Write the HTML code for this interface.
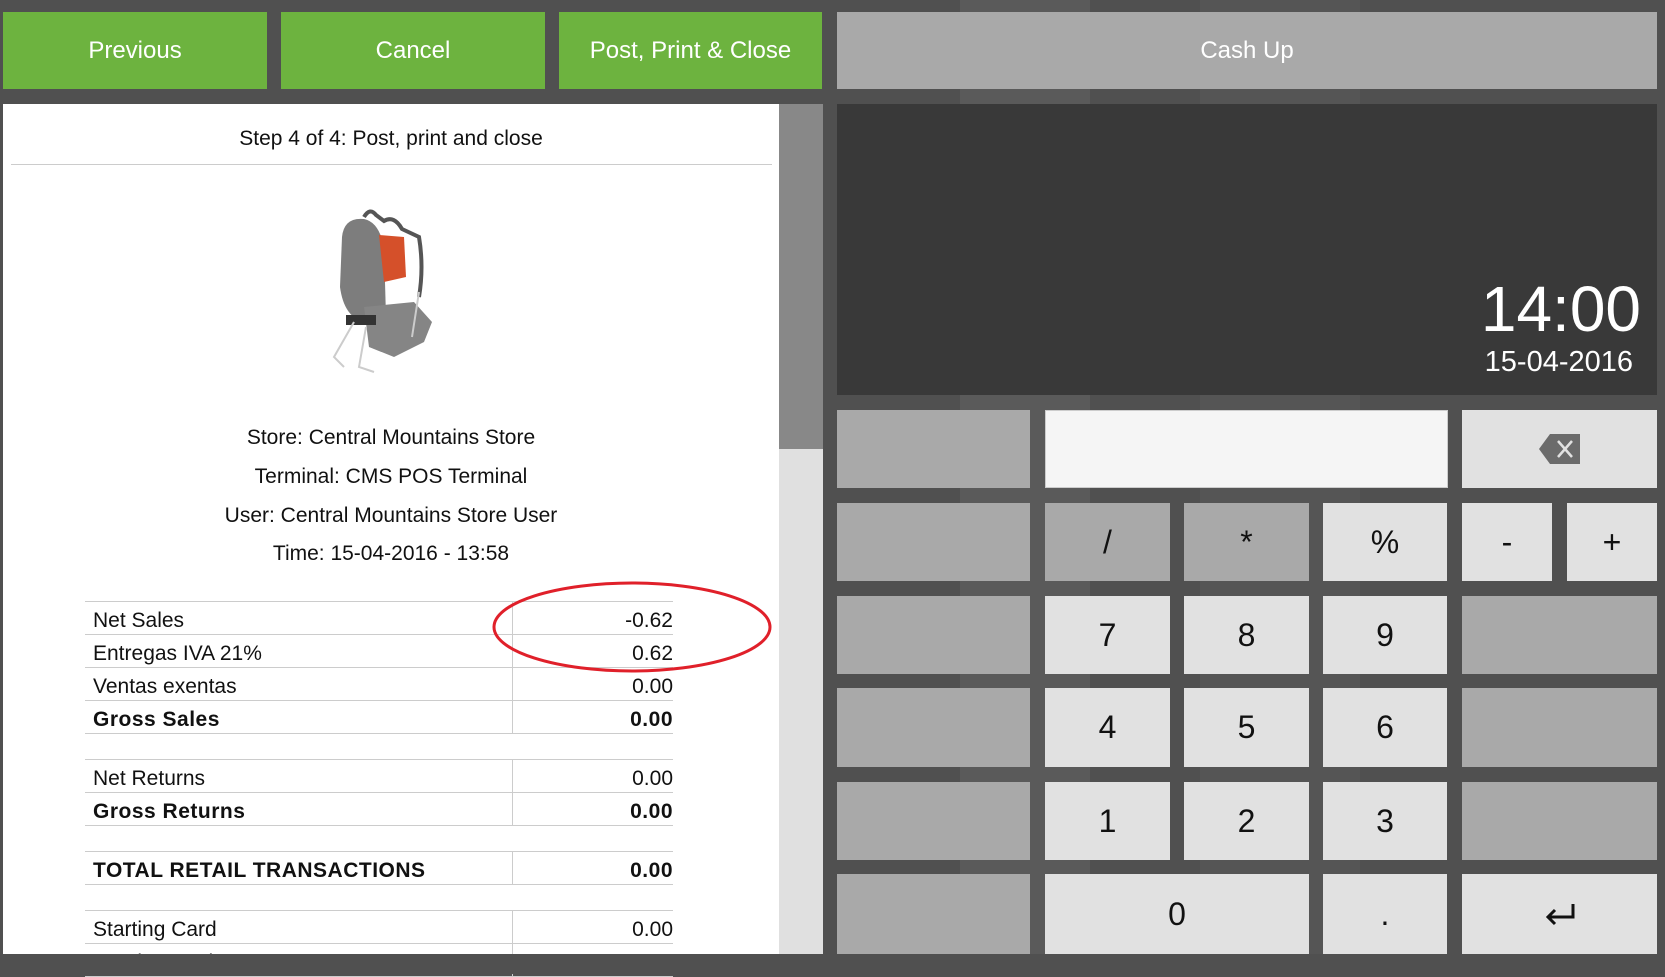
<!DOCTYPE html>
<html><head><style>
*{margin:0;padding:0;box-sizing:border-box}
body{width:1665px;height:974px;background:#505050;font-family:"Liberation Sans",sans-serif;position:relative;overflow:hidden}
.a{position:absolute}
.g{background:#6db33f;color:#fff;font-size:24px;display:flex;align-items:center;justify-content:center}
.k{position:absolute;display:flex;align-items:center;justify-content:center;font-size:32px;color:#111}
.d{background:#a9a9a9}.l{background:#e1e1e1}
.c{position:absolute;text-align:center;width:776px;left:3px;font-size:21px;color:#111}
table{position:absolute;left:85px;top:601px;width:588px;border-collapse:collapse;font-size:21px;color:#111}
td{height:33px;border-top:1px solid #ccc;border-bottom:1px solid #ccc;padding:6px 0 0 8px;vertical-align:middle}
td.v{text-align:right;border-left:1px solid #ccc;width:161px;padding-right:0}
tr.b td{font-weight:bold;letter-spacing:.5px}
tr.s td{height:26px;border:none}
</style></head><body>
<div class="a" style="left:960px;top:0;width:130px;height:974px;background:#5a5a5a"></div>
<div class="a" style="left:1200px;top:0;width:160px;height:974px;background:#555"></div>
<div class="a g" style="left:3px;top:12px;width:264px;height:77px">Previous</div>
<div class="a g" style="left:281px;top:12px;width:264px;height:77px">Cancel</div>
<div class="a g" style="left:559px;top:12px;width:263px;height:77px">Post, Print &amp; Close</div>
<div class="a" style="left:837px;top:12px;width:820px;height:77px;background:#a9a9a9;color:#fff;font-size:24px;display:flex;align-items:center;justify-content:center">Cash Up</div>

<div class="a" style="left:3px;top:104px;width:776px;height:850px;background:#fff"></div>
<div class="a" style="left:779px;top:104px;width:44px;height:345px;background:#888"></div>
<div class="a" style="left:779px;top:449px;width:44px;height:505px;background:#e0e0e0"></div>
<div class="c" style="top:127px">Step 4 of 4: Post, print and close</div>
<div class="a" style="left:11px;top:164px;width:761px;height:1px;background:#ccc"></div>
<svg class="a" style="left:324px;top:207px" width="135" height="173" viewBox="0 0 135 173">
<path d="M40 10 Q46 0 52 8 L60 14 Q70 8 78 22 L95 30 Q100 60 95 90" fill="none" stroke="#555" stroke-width="4"/>
<path d="M18 30 Q20 10 40 12 Q55 15 60 40 L62 110 L40 115 Q20 110 16 80 Z" fill="#7d7d7d"/>
<path d="M55 28 L80 30 L82 70 L60 75 Z" fill="#d5502a"/>
<path d="M40 100 L90 95 L108 115 L100 135 L70 150 L45 140 Z" fill="#858585"/>
<rect x="22" y="108" width="30" height="10" fill="#333"/>
<path d="M30 115 L10 150 L20 160 M42 120 L35 160 L50 165 M95 85 L88 130" fill="none" stroke="#ccc" stroke-width="2"/>
</svg>
<div class="c" style="top:426px">Store: Central Mountains Store</div>
<div class="c" style="top:465px">Terminal: CMS POS Terminal</div>
<div class="c" style="top:504px">User: Central Mountains Store User</div>
<div class="c" style="top:542px">Time: 15-04-2016 - 13:58</div>
<table>
<tr><td>Net Sales</td><td class="v">-0.62</td></tr>
<tr><td>Entregas IVA 21%</td><td class="v">0.62</td></tr>
<tr><td>Ventas exentas</td><td class="v">0.00</td></tr>
<tr class="b"><td>Gross Sales</td><td class="v">0.00</td></tr>
<tr class="s"><td></td><td></td></tr>
<tr><td>Net Returns</td><td class="v">0.00</td></tr>
<tr class="b"><td>Gross Returns</td><td class="v">0.00</td></tr>
<tr class="s"><td></td><td></td></tr>
<tr class="b"><td>TOTAL RETAIL TRANSACTIONS</td><td class="v">0.00</td></tr>
<tr class="s"><td></td><td></td></tr>
<tr><td>Starting Card</td><td class="v">0.00</td></tr>
<tr><td>Starting Cash</td><td class="v">0.00</td></tr>
</table>
<div class="a" style="left:0;top:954px;width:1665px;height:20px;background:#505050"></div>
<svg class="a" style="left:490px;top:580px" width="290" height="95"><ellipse cx="142" cy="47" rx="138" ry="44" fill="none" stroke="#e0202a" stroke-width="3"/></svg>

<div class="a" style="left:837px;top:104px;width:820px;height:291px;background:#393939"></div>
<div class="a" style="right:24px;top:272px;color:#fff;font-size:64px">14:00</div>
<div class="a" style="right:32px;top:346px;color:#fff;font-size:29px">15-04-2016</div>

<div class="k d" style="left:837px;top:410px;width:193px;height:78px"></div>
<div class="k" style="left:1045px;top:410px;width:403px;height:78px;background:#f5f5f5;border:1px solid #ccc"></div>
<div class="k l" style="left:1462px;top:410px;width:195px;height:78px"><svg width="44" height="32" viewBox="0 0 44 32"><path d="M12 1 H42 V31 H12 L1 16 Z" fill="#6b6b6b"/><path d="M20 8 L34 24 M34 8 L20 24" stroke="#e1e1e1" stroke-width="2.5"/></svg></div>

<div class="k d" style="left:837px;top:503px;width:193px;height:78px"></div>
<div class="k d" style="left:1045px;top:503px;width:125px;height:78px">/</div>
<div class="k d" style="left:1184px;top:503px;width:125px;height:78px">*</div>
<div class="k l" style="left:1323px;top:503px;width:124px;height:78px">%</div>
<div class="k l" style="left:1462px;top:503px;width:90px;height:78px">-</div>
<div class="k l" style="left:1567px;top:503px;width:90px;height:78px">+</div>

<div class="k d" style="left:837px;top:596px;width:193px;height:78px"></div>
<div class="k l" style="left:1045px;top:596px;width:125px;height:78px">7</div>
<div class="k l" style="left:1184px;top:596px;width:125px;height:78px">8</div>
<div class="k l" style="left:1323px;top:596px;width:124px;height:78px">9</div>
<div class="k d" style="left:1462px;top:596px;width:195px;height:78px"></div>

<div class="k d" style="left:837px;top:688px;width:193px;height:79px"></div>
<div class="k l" style="left:1045px;top:688px;width:125px;height:79px">4</div>
<div class="k l" style="left:1184px;top:688px;width:125px;height:79px">5</div>
<div class="k l" style="left:1323px;top:688px;width:124px;height:79px">6</div>
<div class="k d" style="left:1462px;top:688px;width:195px;height:79px"></div>

<div class="k d" style="left:837px;top:782px;width:193px;height:78px"></div>
<div class="k l" style="left:1045px;top:782px;width:125px;height:78px">1</div>
<div class="k l" style="left:1184px;top:782px;width:125px;height:78px">2</div>
<div class="k l" style="left:1323px;top:782px;width:124px;height:78px">3</div>
<div class="k d" style="left:1462px;top:782px;width:195px;height:78px"></div>

<div class="k d" style="left:837px;top:874px;width:193px;height:80px"></div>
<div class="k l" style="left:1045px;top:874px;width:264px;height:80px">0</div>
<div class="k l" style="left:1323px;top:874px;width:124px;height:80px">.</div>
<div class="k l" style="left:1462px;top:874px;width:195px;height:80px"><svg width="34" height="24" viewBox="0 0 34 24"><path d="M30 2 V15 H5 M12 8 L5 15 L12 22" fill="none" stroke="#111" stroke-width="3"/></svg></div>
</body></html>
